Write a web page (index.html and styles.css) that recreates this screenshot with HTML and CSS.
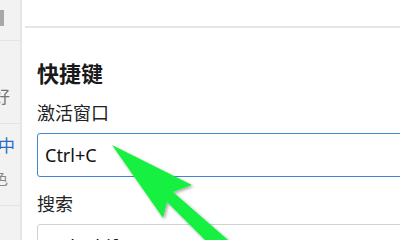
FILE: index.html
```html
<!DOCTYPE html>
<html>
<head>
<meta charset="utf-8">
<link rel="stylesheet" href="styles.css">
</head>
<body>

<div class="window">
    <div class="sidebar">
        <div class="side-grip"></div>
        <div class="side-sep first"></div>
        <div class="side-item item-a">偏好</div>
        <div class="side-sep second"></div>
        <div class="side-item item-b active">中</div>
        <div class="side-item item-c">颜色</div>
        <div class="side-sep third"></div>
    </div>

    <div class="main">
        <div class="top-bar"></div>

        <div class="content">
            <h2 class="section-title">快捷键</h2>

            <div class="field">
                <label class="field-label">激活窗口</label>
                <div class="key-input focused">Ctrl+C</div>
            </div>

            <div class="field">
                <label class="field-label">搜索</label>
                <div class="key-input">Ctrl+Shift+F</div>
            </div>
        </div>
    </div>
</div>

<!-- pointer arrow drawn over the screenshot -->
<svg class="arrow" width="400" height="240" viewBox="0 0 400 240">
    <defs>
        <filter id="shadow" x="-20%" y="-20%" width="140%" height="140%">
            <feDropShadow dx="1.5" dy="1.5" stdDeviation="1.5" flood-color="#000" flood-opacity="0.35"/>
        </filter>
    </defs>
    <polygon points="112,145 192,185 173,192 251,260 225,260 167,202 163,218"
             fill="#18f03f" filter="url(#shadow)"/>
</svg>

</body>
</html>
```

FILE: styles.css
```css
body {
    margin: 0;
    width: 400px;
    height: 240px;
    overflow: hidden;
    background: #fff;
    color: #1a1a1a;
    font-family: "Noto Sans", "Noto Sans CJK SC", sans-serif;
    position: relative;
}

.window {
    display: flex;
    height: 240px;
}

.sidebar {
    width: 20px;
    flex-shrink: 0;
    background: #f2f2f2;
    border-right: 2px solid #e6e6e6;
    overflow: hidden;
    display: flex;
    flex-direction: column;
}

.side-grip {
    width: 4px;
    height: 16px;
    margin-top: 10px;
    background: #a8a8a8;
}

.side-sep {
    height: 1px;
    background: #e4e4e4;
}

.side-sep.first {
    margin-top: 14px;
}

.side-item {
    white-space: nowrap;
    font-family: "Noto Sans CJK SC", sans-serif;
    font-size: 17px;
    line-height: 20px;
    color: #777;
}

.item-a {
    margin-top: 45px;
    margin-left: -24px;
}

.side-sep.second {
    margin-top: 17px;
}

.item-b {
    margin-top: 11px;
    margin-left: -2px;
    color: #2a6cc4;
}

.item-c {
    margin-top: 13px;
    margin-left: -22px;
    color: #888;
    font-size: 15px;
}

.side-sep.third {
    margin-top: 17px;
}

.main {
    flex: 1;
    min-width: 0;
}

.top-bar {
    height: 26px;
    margin-left: 3px;
    border-bottom: 2px solid #e6e6e6;
}

.content {
    padding: 0 0 0 15px;
}

.section-title {
    margin: 29px 0 13px;
    font-family: "Noto Sans CJK SC", sans-serif;
    font-size: 22px;
    line-height: 30px;
    font-weight: bold;
    color: #1a1a1a;
}

.field {
    margin-bottom: 14px;
}

.field-label {
    display: block;
    margin-bottom: 9px;
    font-family: "Noto Sans CJK SC", sans-serif;
    font-size: 18px;
    line-height: 24px;
    color: #222;
}

.key-input {
    width: 420px;
    height: 42px;
    box-sizing: content-box;
    border: 1px solid #d2d2d2;
    border-radius: 3px;
    padding: 0 7px;
    font-family: "Noto Sans", sans-serif;
    font-size: 18px;
    line-height: 42px;
    color: #111;
}

.key-input.focused {
    border-color: #4186d0;
}

.arrow {
    position: absolute;
    left: 0;
    top: 0;
    pointer-events: none;
}
```
